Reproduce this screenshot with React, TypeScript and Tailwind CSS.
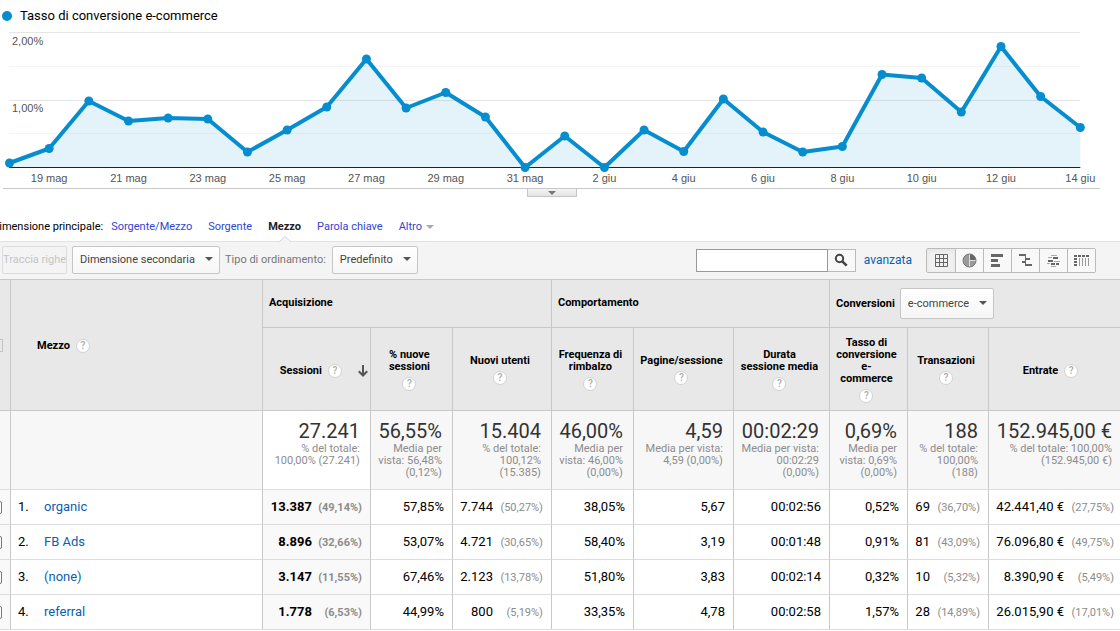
import type { ReactNode } from "react";

const POINTS = [
  163, 148.5, 101, 121, 118, 119, 152, 130, 107, 59, 108, 92.5, 117, 167.5,
  136, 167.5, 130, 151.5, 99, 132, 152, 146.5, 74.5, 78, 112, 46.5, 96.5, 127.5,
];

const DATES = [
  "19 mag", "21 mag", "23 mag", "25 mag", "27 mag", "29 mag", "31 mag",
  "2 giu", "4 giu", "6 giu", "8 giu", "10 giu", "12 giu", "14 giu",
];

const BASELINE = 167.5;
const pointX = (i: number) => 9.5 + i * 39.66;

const DIMENSIONS = ["Sorgente/Mezzo", "Sorgente", "Mezzo", "Parola chiave"];

type Column = { label: string; total: string; note: string; inline?: boolean; sorted?: boolean };

const COLUMNS: Column[] = [
  { label: "Sessioni", total: "27.241", note: "% del totale:\n100,00% (27.241)", inline: true, sorted: true },
  { label: "% nuove\nsessioni", total: "56,55%", note: "Media per\nvista: 56,48%\n(0,12%)" },
  { label: "Nuovi utenti", total: "15.404", note: "% del totale:\n100,12%\n(15.385)" },
  { label: "Frequenza di\nrimbalzo", total: "46,00%", note: "Media per\nvista: 46,00%\n(0,00%)" },
  { label: "Pagine/sessione", total: "4,59", note: "Media per vista:\n4,59 (0,00%)" },
  { label: "Durata\nsessione media", total: "00:02:29", note: "Media per vista:\n00:02:29\n(0,00%)" },
  { label: "Tasso di\nconversione\ne-\ncommerce", total: "0,69%", note: "Media per\nvista: 0,69%\n(0,00%)" },
  { label: "Transazioni", total: "188", note: "% del totale:\n100,00%\n(188)" },
  { label: "Entrate", total: "152.945,00 €", note: "% del totale: 100,00%\n(152.945,00 €)", inline: true },
];

// each cell is [value, share of total]
const ROWS: { name: string; cells: [string, string?][] }[] = [
  {
    name: "organic",
    cells: [["13.387", "(49,14%)"], ["57,85%"], ["7.744", "(50,27%)"], ["38,05%"], ["5,67"], ["00:02:56"], ["0,52%"], ["69", "(36,70%)"], ["42.441,40 €", "(27,75%)"]],
  },
  {
    name: "FB Ads",
    cells: [["8.896", "(32,66%)"], ["53,07%"], ["4.721", "(30,65%)"], ["58,40%"], ["3,19"], ["00:01:48"], ["0,91%"], ["81", "(43,09%)"], ["76.096,80 €", "(49,75%)"]],
  },
  {
    name: "(none)",
    cells: [["3.147", "(11,55%)"], ["67,46%"], ["2.123", "(13,78%)"], ["51,80%"], ["3,83"], ["00:02:14"], ["0,32%"], ["10", "(5,32%)"], ["8.390,90 €", "(5,49%)"]],
  },
  {
    name: "referral",
    cells: [["1.778", "(6,53%)"], ["44,99%"], ["800", "(5,19%)"], ["33,35%"], ["4,78"], ["00:02:58"], ["1,57%"], ["28", "(14,89%)"], ["26.015,90 €", "(17,01%)"]],
  },
];

function Chart() {
  const line = POINTS.map((y, i) => `${pointX(i)},${y}`).join(" ");
  const end = pointX(POINTS.length - 1);

  return (
    <svg viewBox="0 31 1120 157" className="block w-full" role="img" aria-label="Tasso di conversione e-commerce">
      <g strokeWidth="1">
        <path d={`M9 32.5H${end}M9 100.5H${end}`} stroke="#e6e6e6" />
        <path d={`M9 66.5H${end}M9 133.5H${end}`} stroke="#f5f5f5" />
      </g>
      <polygon points={`9.5,${BASELINE} ${line} ${end},${BASELINE}`} fill="#058dc7" fillOpacity="0.11" />
      <path d={`M9 ${BASELINE}H${end}`} stroke="#222" />
      <polyline points={line} fill="none" stroke="#058dcf" strokeWidth="4" strokeLinejoin="round" />
      {POINTS.map((y, i) => (
        <circle key={i} cx={pointX(i)} cy={y} r="4.5" fill="#058dcf" />
      ))}
      <g className="font-['Liberation_Sans',Arial,sans-serif] text-[11px]" fill="#545454">
        <text x="12" y="45">2,00%</text>
        <text x="12" y="112">1,00%</text>
        {DATES.map((d, i) => (
          <text key={d} x={pointX(i * 2 + 1)} y="182" textAnchor="middle">{d}</text>
        ))}
      </g>
    </svg>
  );
}

function Caret({ className }: { className: string }) {
  return (
    <svg viewBox="0 0 8 4" className={`h-1 w-2 ${className}`} aria-hidden="true">
      <path d="M0 0h8L4 4z" fill="currentColor" />
    </svg>
  );
}

function Dropdown({ label, value, className }: { label: string; value: string; className: string }) {
  return (
    <span className={`relative inline-flex items-center ${className}`}>
      <select
        aria-label={label}
        className="h-full w-full appearance-none rounded-xs border border-[#c6c6c6] bg-linear-to-b from-white to-[#f6f6f6] pl-[7px] text-[11px] text-[#444]"
      >
        <option>{value}</option>
      </select>
      <Caret className="pointer-events-none absolute right-[7px] mb-0.5 text-[#555]" />
    </span>
  );
}

function Help() {
  return (
    <button
      type="button"
      aria-label="Guida"
      className="inline-flex size-[14px] shrink-0 items-center justify-center rounded-full border border-[#d2d2d2] bg-white text-[10px] leading-none font-medium text-[#aaa]"
    >
      ?
    </button>
  );
}

const VIEWS: { name: string; icon: ReactNode }[] = [
  { name: "Tabella", icon: <path d="M1.5 1.5h12v12h-12zM5.5 1.5v12M9.5 1.5v12M1.5 5.5h12M1.5 9.5h12" fill="none" stroke="#666" /> },
  {
    name: "Percentuale",
    icon: (
      <>
        <circle cx="7.5" cy="7.5" r="6.5" fill="#9a9a9a" />
        <path d="M7.5 1a6.5 6.5 0 0 1 6.5 6.5H7.5z" fill="#666" />
        <path d="M7.5 1v13M7.5 7.5H14" stroke="#ddd" />
        <circle cx="7.5" cy="7.5" r="6.5" fill="none" stroke="#777" />
      </>
    ),
  },
  { name: "Rendimento", icon: <path d="M1 1h12v3H1zM1 6h7v3H1zM1 11h9v3H1z" fill="#666" /> },
  {
    name: "Confronto",
    icon: (
      <>
        <path d="M1 1h6v2H1zM4 8h3v2H4zM8 5h4v2H8zM8 11h6v2H8z" fill="#666" />
        <path d="M7.5 1v12" stroke="#666" />
      </>
    ),
  },
  {
    name: "Nuvola di termini",
    icon: (
      <>
        <path d="M5 2h6v1H5zM2 4h4v1H2zM8 8h6v1H8zM1 10h3v1H1zM5 13h5v1H5z" fill="#aaa" />
        <path d="M7 4h5v2H7zM2 7h5v2H2zM5 10h4v2H5zM10 10h3v2h-3z" fill="#666" />
      </>
    ),
  },
  {
    name: "Pivot",
    icon: (
      <>
        <path d="M0 2h3v2H0zM4 2h3v2H4zM8 2h3v2H8zM12 2h3v2h-3zM0 5h3v2H0zM0 8h3v2H0zM0 11h3v2H0z" fill="#666" />
        <path d="M5.5 5v8M8.5 5v8M11.5 5v8M14.5 5v8" stroke="#999" />
      </>
    ),
  },
];

function Toolbar() {
  return (
    <div className="flex h-[38px] items-center border-t border-[#e2e2e2] bg-[#f4f4f4] pb-px pl-0.5">
      <button
        type="button"
        disabled
        className="h-7 w-[65px] overflow-hidden rounded-xs border border-[#dcdcdc] text-[11px] whitespace-nowrap text-[#c4c4c4]"
      >
        Traccia righe
      </button>
      <Dropdown label="Dimensione secondaria" value="Dimensione secondaria" className="ml-[5px] h-7 w-[148px]" />
      <span className="mr-1.5 ml-[5px] text-[11px] text-[#777]">Tipo di ordinamento:</span>
      <Dropdown label="Tipo di ordinamento" value="Predefinito" className="h-7 w-[86px]" />

      <form className="ml-auto flex h-[23px]" onSubmit={(e) => e.preventDefault()}>
        <input type="text" aria-label="Cerca" className="w-[132px] border border-[#999] bg-white px-1 text-xs" />
        <button
          type="submit"
          aria-label="Avvia ricerca"
          className="flex w-7 items-center justify-center border border-l-0 border-[#bbb] bg-[#f8f8f8]"
        >
          <svg viewBox="0 0 14 14" className="size-[14px]" fill="none" stroke="#444">
            <circle cx="5.5" cy="5.5" r="3.7" strokeWidth="2" />
            <path d="M8.3 8.3l4.4 4.4" strokeWidth="2.6" />
          </svg>
        </button>
      </form>
      <a href="#avanzata" className="ml-2 text-xs text-[#0b5fae]">avanzata</a>
      <div className="mr-6 ml-[14px] flex h-[25px] rounded-xs border border-[#bbb]">
        {VIEWS.map((v, i) => (
          <button
            key={v.name}
            type="button"
            aria-label={v.name}
            className={`flex w-7 items-center justify-center ${i === 0 ? "bg-[#f0f0f0] inset-shadow-sm" : "border-l border-[#bbb] bg-[#f8f8f8]"}`}
          >
            <svg viewBox="0 0 15 15" className="size-[15px]">{v.icon}</svg>
          </button>
        ))}
      </div>
    </div>
  );
}

function ReportTable() {
  return (
    <table className="w-full table-fixed border-separate border-spacing-0">
      <colgroup>
        <col className="w-[10px]" />
        <col />
        <col className="w-[108px]" />
        <col className="w-[82px]" />
        <col className="w-[99px]" />
        <col className="w-[82px]" />
        <col className="w-[100px]" />
        <col className="w-24" />
        <col className="w-[78px]" />
        <col className="w-[81px]" />
        <col className="w-[132px]" />
      </colgroup>
      <thead className="bg-[#e8e8e8] text-[11px] leading-3 text-black">
        <tr className="h-12">
          <th rowSpan={2} className="border-t border-[#c8c8c8]">
            <input type="checkbox" aria-label="Seleziona tutto" className="-ml-[10px] block size-[13px] appearance-none border border-[#c4c4c4]" />
          </th>
          <th rowSpan={2} className="border-t border-l border-[#c8c8c8] pt-px pl-[26px]">
            <span className="flex items-center gap-1.5">Mezzo <Help /></span>
          </th>
          <th colSpan={3} className="border-t border-l border-[#c8c8c8] pb-0.5 pl-1.5 text-left">Acquisizione</th>
          <th colSpan={3} className="border-t border-l border-[#c8c8c8] pb-0.5 pl-1.5 text-left">Comportamento</th>
          <th colSpan={3} className="border-t border-l border-[#c8c8c8] pl-1.5">
            <span className="flex items-center gap-[5px]">
              Conversioni
              <span className="font-normal">
                <Dropdown label="Conversioni" value="e-commerce" className="h-[31px] w-[94px]" />
              </span>
            </span>
          </th>
        </tr>
        <tr className="h-[83px]">
          {COLUMNS.map((c) => (
            <th key={c.label} className="border-t border-l border-[#c8c8c8] whitespace-pre-line">
              {c.inline ? (
                <span className={`flex items-center gap-1.5 pt-1 ${c.sorted ? "justify-end pr-0.5" : "justify-center pr-2"}`}>
                  {c.label} <Help />
                  {c.sorted && (
                    <svg viewBox="0 0 10 12" className="ml-2.5 h-3 w-2.5" fill="none" stroke="#555" strokeWidth="2" aria-label="Ordine decrescente">
                      <path d="M5 0v10.5M.8 6.3L5 10.5l4.2-4.2" />
                    </svg>
                  )}
                </span>
              ) : (
                <span className="flex flex-col items-center gap-1 pt-px pr-1">
                  {c.label} <Help />
                </span>
              )}
            </th>
          ))}
        </tr>
      </thead>
      <tbody>
        <tr className="h-[79px] bg-[#f7f7f7] text-right align-top">
          <td className="border-t border-[#c8c8c8]" />
          <td className="border-t border-l border-[#c8c8c8]" />
          {COLUMNS.map((c) => (
            <td
              key={c.label}
              className={`border-t border-l border-[#c8c8c8] pt-2 pr-2.5 whitespace-pre last:pr-2 ${c.sorted ? "bg-white" : ""}`}
            >
              <div className="flex flex-col items-end">
                <span className="text-xl leading-6 text-[#333]">{c.total}</span>
                <span className="text-[11px] leading-3 text-[#8c8c8c]">{c.note}</span>
              </div>
            </td>
          ))}
        </tr>
        {ROWS.map((row, n) => (
          <tr key={row.name} className="h-[35px] text-[13px] leading-4 text-black">
            <td className="border-t border-[#ddd] bg-[#f9f9f9]">
              <input type="checkbox" aria-label={row.name} className="-ml-[11px] block size-[13px] appearance-none rounded-xs border border-[#767676] bg-white" />
            </td>
            <td className="border-t border-l border-t-[#ddd] border-l-[#c8c8c8] pl-[7px]">
              <span className="inline-block w-[26px]">{n + 1}.</span>
              <a href={`#${n + 1}`} className="text-[#0b5fae]">{row.name}</a>
            </td>
            {row.cells.map(([value, share], i) => (
              <td
                key={i}
                className={`border-t border-l border-t-[#ddd] border-l-[#c8c8c8] pr-2 text-right whitespace-nowrap last:pr-1.5 ${i === 0 ? "bg-[#f9f9f9] font-bold" : ""}`}
              >
                {value}
                {share && <span className="inline-block w-[50px] text-[11px] text-[#8c8c8c]">{share}</span>}
              </td>
            ))}
          </tr>
        ))}
        <tr>
          <td className="border-t border-[#ddd]" colSpan={11} />
        </tr>
      </tbody>
    </table>
  );
}

export default function App() {
  return (
    <div className="overflow-hidden bg-white font-[Roboto,Arial,sans-serif]">
      <header className="flex h-[31px] items-center gap-2 pl-0.5 text-[13px] text-black">
        <span className="size-2.5 rounded-full bg-[#058dcf]" />
        Tasso di conversione e-commerce
      </header>
      <Chart />
      <div className="mr-5 ml-[3px] flex h-7 items-start justify-center border-t border-[#c8c8c8]">
        <button
          type="button"
          aria-label="Riduci grafico"
          className="flex h-2 w-[50px] items-center justify-center border border-t-0 border-[#c8c8c8] bg-linear-to-b from-[#f4f4f4] to-[#e4e4e4]"
        >
          <Caret className="text-[#777]" />
        </button>
      </div>

      {/* Primary dimension */}
      <nav className="-ml-2 flex h-[25px] text-[11px] leading-[22px] whitespace-nowrap text-black">
        <span className="mr-2">Dimensione principale:</span>
        <ul className="flex gap-4">
          {DIMENSIONS.map((d) =>
            d === "Mezzo" ? (
              <li key={d} className="relative font-bold text-[#222]">
                {d}
                <svg viewBox="0 0 12 6" className="absolute top-5 left-1/2 z-10 h-1.5 w-3 -translate-x-1/2">
                  <path d="M0 6L6 .5 12 6" fill="#f4f4f4" stroke="#d2d2d2" />
                </svg>
              </li>
            ) : (
              <li key={d}>
                <a href={`#${d}`} className="text-[#3344d0]">{d}</a>
              </li>
            ),
          )}
          <li>
            <a href="#altro" className="flex items-center gap-1 text-[#3344d0]">
              Altro <Caret className="text-[#aaa]" />
            </a>
          </li>
        </ul>
      </nav>

      <Toolbar />
      <ReportTable />
    </div>
  );
}
